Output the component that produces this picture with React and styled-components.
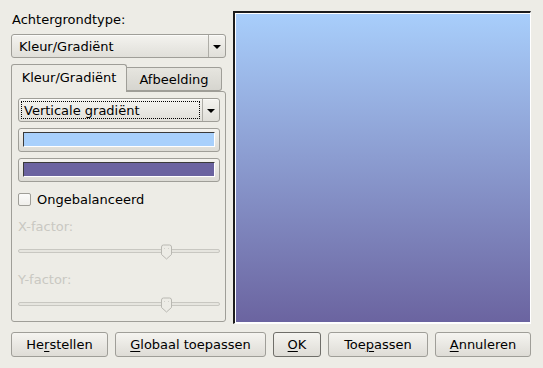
import styled, { createGlobalStyle } from "styled-components";

const GlobalStyle = createGlobalStyle`
  html, body {
    margin: 0;
    padding: 0;
    background: #edece6;
  }
  body {
    font-family: "DejaVu Sans", "Liberation Sans", sans-serif;
    font-size: 13px;
    color: #000;
  }
`;

const Styled = {
  Window: styled.div`
    width: 543px;
    height: 368px;
    box-sizing: border-box;
    padding: 11px 12px 0 11px;
    background: #edece6;
    display: flex;
    flex-direction: column;
  `,

  Main: styled.div`
    display: flex;
    gap: 7px;
    height: 313px;
  `,

  LeftColumn: styled.div`
    width: 215px;
    display: flex;
    flex-direction: column;
  `,

  Label: styled.div`
    height: 20px;
    line-height: 18px;
    margin-bottom: 3px;
    padding-left: 1px;
  `,

  Combo: styled.div`
    box-sizing: border-box;
    height: 24px;
    display: flex;
    align-items: stretch;
    border: 1px solid #9f9e98;
    border-radius: 3px;
    background: linear-gradient(#f4f3ef, #e0dfd9);
    box-shadow: inset 0 1px 0 #fbfbf9;
  `,

  ComboText: styled.div`
    flex: 1;
    display: flex;
    align-items: center;
    padding-left: 5px;
    margin: 2px;
    ${({ $focused }) =>
      $focused &&
      `outline: 1px dotted #000; outline-offset: -1px; padding-left: 3px;`}
  `,

  ComboArrow: styled.div`
    width: 16px;
    border-left: 1px solid #aeada7;
    display: flex;
    align-items: center;
    justify-content: center;

    &::after {
      content: "";
      border-left: 4px solid transparent;
      border-right: 4px solid transparent;
      border-top: 4px solid #000;
      margin-top: 1px;
    }
  `,

  TabRow: styled.div`
    display: flex;
    align-items: flex-end;
    margin-top: 6px;
    height: 28px;
    position: relative;
    z-index: 1;
  `,

  Tab: styled.div`
    box-sizing: border-box;
    border: 1px solid #9f9e98;
    border-radius: 3px 3px 0 0;
    display: flex;
    align-items: center;
    justify-content: center;
    ${({ $active }) =>
      $active
        ? `
      width: 116px;
      height: 28px;
      background: #edece6;
      border-bottom: none;
      padding-bottom: 2px;
    `
        : `
      width: 95px;
      height: 24px;
      margin-bottom: 1px;
      background: linear-gradient(#e6e5df, #d6d5cf);
      border-left: none;
      border-radius: 0 3px 3px 0;
      padding-top: 1px;
    `}
  `,

  Panel: styled.div`
    box-sizing: border-box;
    height: 231px;
    margin-top: -1px;
    border: 1px solid #9f9e98;
    border-radius: 0 3px 3px 3px;
    padding: 6px 5px 0 6px;
    display: flex;
    flex-direction: column;
  `,

  ColorButton: styled.div`
    box-sizing: border-box;
    height: 24px;
    margin-top: 6px;
    border: 1px solid #9f9e98;
    border-radius: 3px;
    background: linear-gradient(#f4f3ef, #dcdbd5);
    padding: 3px 4px 4px 4px;
    display: flex;
  `,

  Swatch: styled.div`
    flex: 1;
    background: ${({ $color }) => $color};
    border-top: 1px solid #3a3a3a;
    border-left: 1px solid #3a3a3a;
    border-right: 1px solid #fff;
    border-bottom: 1px solid #fff;
  `,

  CheckRow: styled.label`
    display: flex;
    align-items: center;
    gap: 6px;
    margin-top: 10px;
    height: 14px;
  `,

  CheckBox: styled.span`
    box-sizing: border-box;
    width: 13px;
    height: 13px;
    border: 1px solid #9f9e98;
    border-radius: 2px;
    background: linear-gradient(#fbfbfa, #f0efeb);
  `,

  FactorLabel: styled.div`
    margin-top: ${({ $gap }) => $gap}px;
    height: 16px;
    line-height: 16px;
    color: #c9c8c2;
  `,

  Slider: styled.div`
    position: relative;
    height: 24px;
    margin-top: 4px;
    display: flex;
    align-items: center;
  `,

  Track: styled.div`
    flex: 1;
    height: 4px;
    box-sizing: border-box;
    border: 1px solid #c8c7c1;
    border-radius: 2px;
    background: #e6e5df;
  `,

  Handle: styled.svg`
    position: absolute;
    top: 5px;
  `,

  Preview: styled.div`
    box-sizing: border-box;
    width: 298px;
    height: 313px;
    border-top: 2px solid #1c1c1c;
    border-left: 2px solid #1c1c1c;
    border-right: 1px solid #fff;
    border-bottom: 1px solid #fff;
    padding: 1px 0 1px 1px;
    background: #fff;
  `,

  Gradient: styled.div`
    width: 100%;
    height: 100%;
    background: linear-gradient(#a8cefb, #6b64a0);
  `,

  ButtonRow: styled.div`
    display: flex;
    gap: 7px;
    margin-top: 8px;
  `,

  Button: styled.button`
    box-sizing: border-box;
    height: 25px;
    width: ${({ $width }) => $width}px;
    border: 1px solid ${({ $default }) => ($default ? "#6f6e69" : "#9f9e98")};
    border-radius: 3px;
    background: linear-gradient(#f5f4f0, #dedcd6);
    font-family: "DejaVu Sans", "Liberation Sans", sans-serif;
    font-size: 13px;
    color: #000;
    padding: 0;
    margin: 0;

    u {
      text-decoration: underline;
      text-underline-offset: 2px;
    }
  `,
};

function Handle({ left }) {
  return (
    <Styled.Handle style={{ left }} width="13" height="16" viewBox="0 0 13 16">
      <path
        d="M1.5 3 Q1.5 1 3.5 1 L9.5 1 Q11.5 1 11.5 3 L11.5 10.5 L6.5 15 L1.5 10.5 Z"
        fill="#edece6"
        stroke="#b9b8b2"
        strokeWidth="1"
      />
      <path d="M4 4 l1 1 M8 4 l1 1" stroke="#d2d1cb" strokeWidth="1" />
    </Styled.Handle>
  );
}

function Combo({ children, focused }) {
  return (
    <Styled.Combo>
      <Styled.ComboText $focused={focused}>{children}</Styled.ComboText>
      <Styled.ComboArrow />
    </Styled.Combo>
  );
}

function App() {
  return (
    <>
      <GlobalStyle />
      <Styled.Window>
        <Styled.Main>
          <Styled.LeftColumn>
            <Styled.Label>Achtergrondtype:</Styled.Label>
            <Combo>Kleur/Gradiënt</Combo>
            <Styled.TabRow>
              <Styled.Tab $active>Kleur/Gradiënt</Styled.Tab>
              <Styled.Tab>Afbeelding</Styled.Tab>
            </Styled.TabRow>
            <Styled.Panel>
              <Combo focused>Verticale gradiënt</Combo>
              <Styled.ColorButton>
                <Styled.Swatch $color="#a8d0fc" />
              </Styled.ColorButton>
              <Styled.ColorButton>
                <Styled.Swatch $color="#6b63a0" />
              </Styled.ColorButton>
              <Styled.CheckRow>
                <Styled.CheckBox />
                Ongebalanceerd
              </Styled.CheckRow>
              <Styled.FactorLabel $gap={13}>X-factor:</Styled.FactorLabel>
              <Styled.Slider>
                <Styled.Track />
                <Handle left={142} />
              </Styled.Slider>
              <Styled.FactorLabel $gap={9}>Y-factor:</Styled.FactorLabel>
              <Styled.Slider>
                <Styled.Track />
                <Handle left={142} />
              </Styled.Slider>
            </Styled.Panel>
          </Styled.LeftColumn>
          <Styled.Preview>
            <Styled.Gradient />
          </Styled.Preview>
        </Styled.Main>
        <Styled.ButtonRow>
          <Styled.Button $width={97}>
            He<u>r</u>stellen
          </Styled.Button>
          <Styled.Button $width={151}>
            <u>G</u>lobaal toepassen
          </Styled.Button>
          <Styled.Button $width={48} $default>
            <u>O</u>K
          </Styled.Button>
          <Styled.Button $width={100}>
            Toe<u>p</u>assen
          </Styled.Button>
          <Styled.Button $width={96}>
            <u>A</u>nnuleren
          </Styled.Button>
        </Styled.ButtonRow>
      </Styled.Window>
    </>
  );
}

export default App;
